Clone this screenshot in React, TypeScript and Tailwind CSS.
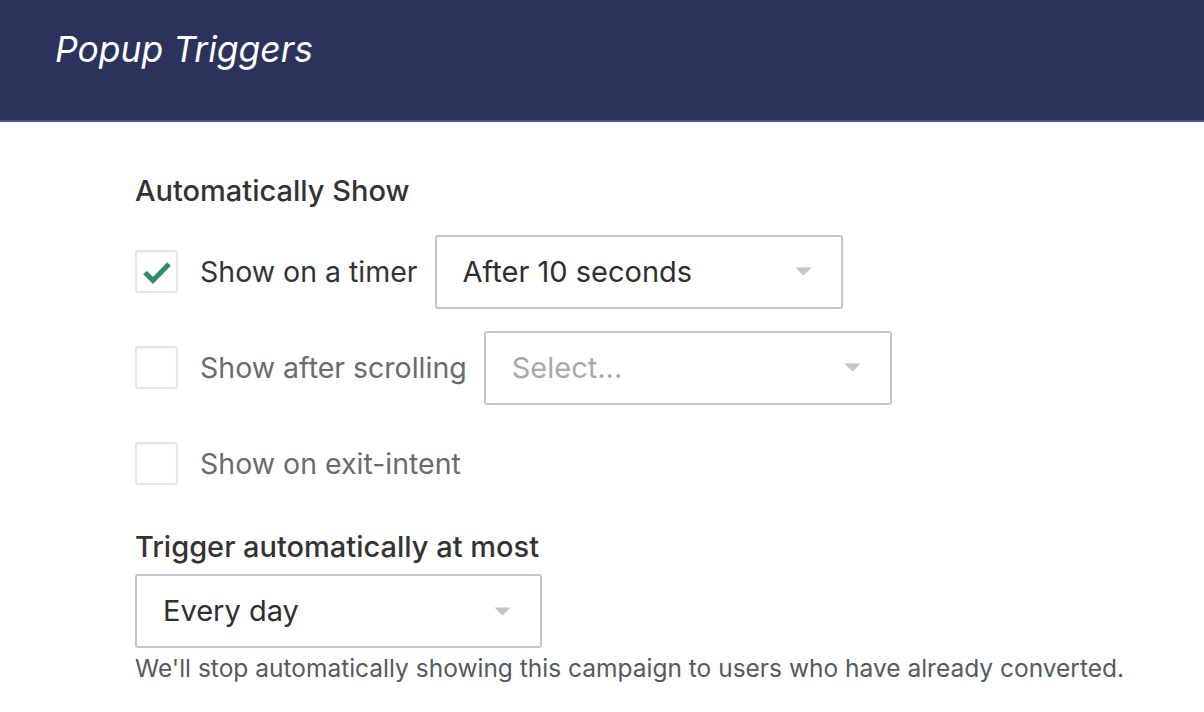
import { type ReactNode } from 'react';

const font = { fontFamily: 'Inter, Lato, sans-serif' };

function Caret() {
  return (
    <svg className="w-[17px] h-[9px]" viewBox="0 0 17 9">
      <path d="M0.5 0.5h16L8.5 8.5z" fill="#c4c4c4" />
    </svg>
  );
}

function Select({ value, placeholder, className }: { value?: string; placeholder?: string; className: string }) {
  return (
    <div
      className={`flex items-center justify-between h-[74px] pl-[26px] pr-[29px] border-2 border-[#c3c6cf] rounded-[3px] bg-white ${className}`}
    >
      {value ? (
        <span className="text-[29px] leading-[40px] text-[#2e2e2e]">{value}</span>
      ) : (
        <span className="text-[29px] leading-[40px] text-[#a7a9ad]">{placeholder}</span>
      )}
      <Caret />
    </div>
  );
}

function Checkbox({ checked }: { checked?: boolean }) {
  return (
    <div className="w-[43px] h-[43px] flex items-center justify-center border-2 border-[#e6e6e6] rounded-[3px] bg-white shadow-[inset_0_1px_2px_rgba(0,0,0,0.06)] shrink-0">
      {checked && (
        <svg className="w-[30px] h-[24px]" viewBox="0 0 30 24">
          <path d="M3 12.5l8 8L27 4" fill="none" stroke="#2f8c6c" strokeWidth="5" strokeLinejoin="miter" />
        </svg>
      )}
    </div>
  );
}

function Row({ checked, label, children }: { checked?: boolean; label: string; children?: ReactNode }) {
  return (
    <div className="flex items-center h-[75px]">
      <Checkbox checked={checked} />
      <span
        className={`ml-[22px] mr-[17px] text-[28.5px] leading-[40px] ${checked ? 'text-[#333333]' : 'text-[#6b6b6b]'}`}
      >
        {label}
      </span>
      {children}
    </div>
  );
}

export default function App() {
  return (
    <div className="w-[1204px] h-[712px] bg-white overflow-hidden" style={font}>
      <div className="h-[122px] bg-[#2b325c] border-b-2 border-[#4d5597] flex items-center pl-[55px] pb-[20px]">
        <h1 className="text-[35.5px] leading-[48px] italic text-white">Popup Triggers</h1>
      </div>
      <div className="pl-[135px] pt-[49px]">
        <h2 className="text-[29px] leading-[39px] font-medium text-[#333333]">Automatically Show</h2>
        <div className="mt-[24px] flex flex-col gap-[21px]">
          <Row checked label="Show on a timer">
            <Select value="After 10 seconds" className="w-[408px]" />
          </Row>
          <Row label="Show after scrolling">
            <Select placeholder="Select..." className="w-[408px]" />
          </Row>
          <Row label="Show on exit-intent" />
        </div>
        <h2 className="mt-[26px] text-[29px] leading-[39px] font-medium text-[#333333]">
          Trigger automatically at most
        </h2>
        <Select value="Every day" className="mt-[8px] w-[407px]" />
        <p className="mt-[4px] text-[24.5px] leading-[33px] text-[#555a62]">
          We'll stop automatically showing this campaign to users who have already converted.
        </p>
      </div>
    </div>
  );
}
